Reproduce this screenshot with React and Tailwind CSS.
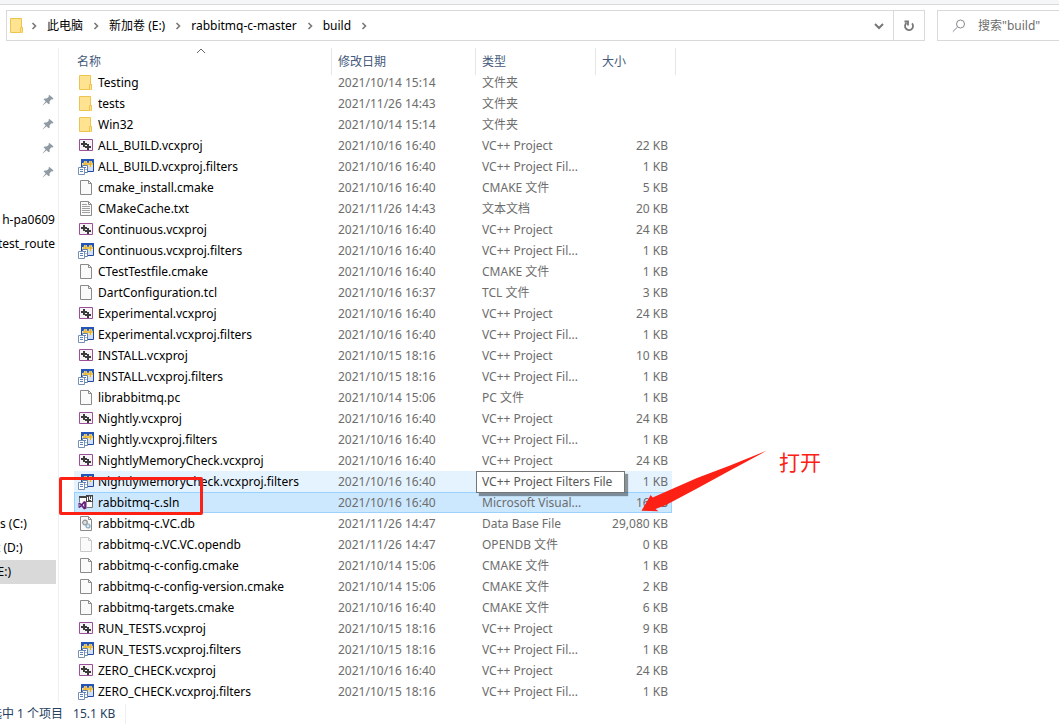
import { useState } from 'react'
import clsx from 'clsx'

const FILES = [
  ['folder', 'Testing', '2021/10/14 15:14', '文件夹', ''],
  ['folder', 'tests', '2021/11/26 14:43', '文件夹', ''],
  ['folder', 'Win32', '2021/10/14 15:14', '文件夹', ''],
  ['project', 'ALL_BUILD.vcxproj', '2021/10/16 16:40', 'VC++ Project', '22 KB'],
  ['filters', 'ALL_BUILD.vcxproj.filters', '2021/10/16 16:40', 'VC++ Project Fil...', '1 KB'],
  ['file', 'cmake_install.cmake', '2021/10/16 16:40', 'CMAKE 文件', '5 KB'],
  ['text', 'CMakeCache.txt', '2021/11/26 14:43', '文本文档', '20 KB'],
  ['project', 'Continuous.vcxproj', '2021/10/16 16:40', 'VC++ Project', '24 KB'],
  ['filters', 'Continuous.vcxproj.filters', '2021/10/16 16:40', 'VC++ Project Fil...', '1 KB'],
  ['file', 'CTestTestfile.cmake', '2021/10/16 16:40', 'CMAKE 文件', '1 KB'],
  ['file', 'DartConfiguration.tcl', '2021/10/16 16:37', 'TCL 文件', '3 KB'],
  ['project', 'Experimental.vcxproj', '2021/10/16 16:40', 'VC++ Project', '24 KB'],
  ['filters', 'Experimental.vcxproj.filters', '2021/10/16 16:40', 'VC++ Project Fil...', '1 KB'],
  ['project', 'INSTALL.vcxproj', '2021/10/15 18:16', 'VC++ Project', '10 KB'],
  ['filters', 'INSTALL.vcxproj.filters', '2021/10/15 18:16', 'VC++ Project Fil...', '1 KB'],
  ['file', 'librabbitmq.pc', '2021/10/14 15:06', 'PC 文件', '1 KB'],
  ['project', 'Nightly.vcxproj', '2021/10/16 16:40', 'VC++ Project', '24 KB'],
  ['filters', 'Nightly.vcxproj.filters', '2021/10/16 16:40', 'VC++ Project Fil...', '1 KB'],
  ['project', 'NightlyMemoryCheck.vcxproj', '2021/10/16 16:40', 'VC++ Project', '24 KB'],
  ['filters', 'NightlyMemoryCheck.vcxproj.filters', '2021/10/16 16:40', '', '1 KB'],
  ['solution', 'rabbitmq-c.sln', '2021/10/16 16:40', 'Microsoft Visual...', '16 KB'],
  ['database', 'rabbitmq-c.VC.db', '2021/11/26 14:47', 'Data Base File', '29,080 KB'],
  ['hidden', 'rabbitmq-c.VC.VC.opendb', '2021/11/26 14:47', 'OPENDB 文件', '0 KB'],
  ['file', 'rabbitmq-c-config.cmake', '2021/10/14 15:06', 'CMAKE 文件', '1 KB'],
  ['file', 'rabbitmq-c-config-version.cmake', '2021/10/14 15:06', 'CMAKE 文件', '2 KB'],
  ['file', 'rabbitmq-targets.cmake', '2021/10/16 16:40', 'CMAKE 文件', '6 KB'],
  ['project', 'RUN_TESTS.vcxproj', '2021/10/15 18:16', 'VC++ Project', '9 KB'],
  ['filters', 'RUN_TESTS.vcxproj.filters', '2021/10/15 18:16', 'VC++ Project Fil...', '1 KB'],
  ['project', 'ZERO_CHECK.vcxproj', '2021/10/16 16:40', 'VC++ Project', '24 KB'],
  ['filters', 'ZERO_CHECK.vcxproj.filters', '2021/10/15 18:16', 'VC++ Project Fil...', '1 KB'],
]

const HOVERED = 'NightlyMemoryCheck.vcxproj.filters'
const CRUMBS = ['此电脑', '新加卷 (E:)', 'rabbitmq-c-master', 'build']
const COLUMNS = ['名称', '修改日期', '类型', '大小']

function Page({ stroke = '#8a8a8a', children }) {
  return (
    <>
      <path d="M2.5 .5H10.5L13.5 3.5V14.5H2.5Z" fill="#fafafa" stroke={stroke} />
      <path d="M10.5 .5V3.5H13.5" fill="none" stroke={stroke} />
      {children}
    </>
  )
}

function FileIcon({ kind }) {
  return (
    <svg viewBox="0 0 16 16" className="size-4 shrink-0" aria-hidden="true">
      {kind === 'folder' && (
        <>
          <path d="M2 .5H13V15H2Z" fill="#ffe391" />
          <path d="M1.5 .5H12.5V9.5H13.5V14.5H1.5Z" fill="none" stroke="#ecc450" />
          <path d="M11.5 14.5V9.5H13.5V14.5" fill="#ffe391" stroke="#ecc450" />
        </>
      )}
      {kind === 'file' && <Page />}
      {kind === 'hidden' && <Page stroke="#c8c8c8" />}
      {kind === 'text' && (
        <Page>
          <path d="M4 3.5H9M4 5.5H12M4 7.5H12M4 9.5H12M4 11.5H12" stroke="#a0a0a0" />
        </Page>
      )}
      {kind === 'database' && (
        <Page>
          <circle cx="7" cy="6.500" r="2.300" fill="#ddd" stroke="#8d9296" strokeWidth="1.200" />
          <circle cx="10" cy="10" r="2" fill="#d5e9f5" stroke="#88a9bd" strokeWidth="1.200" />
        </Page>
      )}
      {kind === 'project' && (
        <>
          <path d="M1.5 1.5H14.5V12.5H1.5Z" fill="#f6f3f6" stroke="#9b4f96" />
          <path d="M6 3V9M3 6H9M10 6V12M7 9H13" stroke="#3b3b3b" strokeWidth="2" />
        </>
      )}
      {kind === 'filters' && (
        <>
          <path d="M3.5 1.5H15.5V12.5H3.5Z" fill="#cfe0f8" stroke="#24489f" />
          <path d="M3 0H16V4H3Z" fill="#2454b8" />
          <path d="M7.500 2V8M5 5H10M12.500 2V8M10 5H15" stroke="#fff1a8" strokeWidth="2.500" />
          <path d="M7.500 2V8M5 5H10M12.500 2V8M10 5H15" stroke="#eab32a" strokeWidth="1.300" />
          <path d="M4.500 6.500H9.500V13.500H4.500Z" fill="#fff" stroke="#6580aa" />
          <path d="M.5 8.500H6.500V15.500H.5Z" fill="#fff" stroke="#7890b5" />
          <path d="M2 10.500H5M2 12.500H5M6 8.500H8M7.500 10.500H8.500" stroke="#5c80b8" />
        </>
      )}
      {kind === 'solution' && (
        <>
          <path d="M1.500 7V1.500H14.500V12.500H9" fill="#fafafa" stroke="#777" />
          <path d="M1 1H8V3H1ZM8 0H15V7H8Z" fill="#454545" />
          <path d="M9.500 2V6M11.500 1.500V4.500H14M13.500 1.500V6" fill="none" stroke="#fff" />
          <path d="M6 6L3.500 9L1.500 7.500L.5 8V12.500L1.500 13L3.500 11.500L6 14.500L8.500 13.500V7ZM6.200 8.500V12L4.600 10.200ZM1.500 9L2.600 10.200L1.500 11.400Z" fill="#68217a" fillRule="evenodd" />
        </>
      )}
    </svg>
  )
}

function Chevron() {
  return (
    <svg viewBox="0 0 6 8" className="mx-2.5 h-2 w-1.5 shrink-0" fill="none" stroke="#777" strokeWidth="1.600" aria-hidden="true">
      <path d="M1.500 1L4.500 4L1.500 7" />
    </svg>
  )
}

function Pin() {
  return (
    <svg viewBox="0 0 12 12" className="size-3" aria-hidden="true">
      <path d="M7.500 1L11.500 4.500L10.500 5.500L9.500 5.300L7.600 7.300L7.700 9.500L6.700 10.300L4.500 8.200L1 11.200L.7 10.900L3.600 7.400L1.600 5.300L2.500 4.400L4.700 4.500L6.800 2.700L6.500 1.800Z" fill="#8f9aa3" />
    </svg>
  )
}

function AddressBar() {
  return (
    <div className="flex h-9 gap-3 pt-[5px] pl-1.5">
      <div className="flex min-w-0 flex-1 border border-[#d9d9d9]">
        <nav className="flex min-w-0 flex-1 items-center pl-0.5" aria-label="路径">
          <span className="-mr-1 flex">
            <FileIcon kind="folder" />
          </span>
          <Chevron />
          {CRUMBS.map((crumb) => (
            <span key={crumb} className="flex items-center">
              <button type="button" className="whitespace-nowrap">{crumb}</button>
              <Chevron />
            </span>
          ))}
        </nav>
        <button type="button" aria-label="以前的位置" className="flex w-7 items-center justify-center">
          <svg viewBox="0 0 10 8" className="h-2 w-2.5" fill="none" stroke="#777" strokeWidth="2">
            <path d="M1 2L5 6L9 2" />
          </svg>
        </button>
        <button type="button" aria-label="刷新" className="flex w-[31px] items-center justify-center border-l border-[#d9d9d9]">
          <svg viewBox="0 0 12 12" className="size-3" fill="none" stroke="#777" strokeWidth="1.800">
            <path d="M3.500 3A4 4 0 1 0 9 3.400M1.500 1.500H5V5.500" />
          </svg>
        </button>
      </div>
      <label className="flex w-[122px] items-center border border-r-0 border-[#d9d9d9] pl-3.5">
        <svg viewBox="0 0 14 14" className="size-3.5 shrink-0" fill="none" stroke="#8a8690" aria-label="搜索">
          <circle cx="8.500" cy="5" r="4" />
          <path d="M5.500 8L.8 12.700" />
        </svg>
        <input type="text" placeholder={'搜索"build"'} className="ml-3 w-full min-w-0 outline-none placeholder:text-[#6d6d6d]" />
      </label>
    </div>
  )
}

function Sidebar() {
  return (
    <aside className="w-[59px] shrink-0 overflow-hidden border-r border-[#f0f0f0] pt-10 leading-6">
      <ul>
        {[1, 2, 3, 4].map((n) => (
          <li key={n} className="flex h-6 items-center justify-end pr-1">
            <Pin />
          </li>
        ))}
      </ul>
      <ul className="mt-6 pr-[3px]">
        {['h-pa0609', 'test_route'].map((name) => (
          <li key={name} className="flex h-6 justify-end whitespace-nowrap">{name}</li>
        ))}
      </ul>
      <ul className="mt-64 mr-0.5 whitespace-nowrap">
        <li className="h-6">s (C:)</li>
        <li className="h-6"><span className="-ml-1">t (D:)</span></li>
        <li className="h-6 bg-[#d9d9d9]"><span className="-ml-1.5">(E:)</span></li>
      </ul>
    </aside>
  )
}

function FileTable() {
  const [selected, setSelected] = useState('rabbitmq-c.sln')

  return (
    <table className="w-[598px] table-fixed border-collapse">
      <colgroup>
        <col className="w-[258px]" />
        <col className="w-36" />
        <col className="w-[120px]" />
        <col className="w-[76px]" />
      </colgroup>
      <thead>
        <tr>
          {COLUMNS.map((column, i) => (
            <th key={column} className="relative p-0 text-left font-normal text-[#44597a]">
              {i === 0 && (
                <svg viewBox="0 0 10 6" className="absolute top-0 left-[122px] h-1.5 w-2.5" fill="none" stroke="#666">
                  <path d="M1 5L5 1L9 5" />
                </svg>
              )}
              <div
                className={clsx(
                  '-mb-[3px] h-[27px] border-r border-[#e5e5e5] leading-[27px]',
                  i === 0 ? 'pl-[3px]' : 'pl-1.5',
                  i === 3 && '-mr-1',
                )}
              >
                {column}
              </div>
            </th>
          ))}
        </tr>
      </thead>
      <tbody className="leading-[21px] text-[#6d6d6d]">
        {FILES.map(([kind, name, date, type, size]) => (
          <tr
            key={name}
            onClick={() => setSelected(name)}
            className={clsx(
              name === HOVERED && 'bg-[#e5f3ff]',
              name === selected && 'bg-[#cce8ff] outline -outline-offset-1 outline-[#99d1ff]',
            )}
          >
            <td className="p-0">
              <div className="flex h-[21px] items-center gap-1 pl-1 whitespace-nowrap text-black">
                <FileIcon kind={kind} />
                {name}
              </div>
            </td>
            <td className="p-0 pl-1.5 whitespace-nowrap">{date}</td>
            <td className="p-0 pl-1.5 whitespace-nowrap">{type}</td>
            <td className="p-0 pr-1 text-right whitespace-nowrap">{size}</td>
          </tr>
        ))}
      </tbody>
    </table>
  )
}

export default function App() {
  return (
    <div className="min-h-screen overflow-hidden bg-white font-['Noto_Sans','Noto_Sans_CJK_SC',sans-serif] text-[12px] text-black">
      <div className="h-[5px] border-b border-[#d9dadc] bg-[#f5f6f7]" />
      <AddressBar />
      <div className="mt-[7px] flex">
        <Sidebar />
        <main className="relative min-w-0 flex-1 pl-[15px]">
          <FileTable />
          <div role="tooltip" className="absolute top-[423px] left-[417px] border border-[#767676] bg-white pr-3 pl-[5px] leading-5 whitespace-nowrap text-[#575757] shadow-[3px_3px_1px_rgba(0,0,0,0.4)]">
            VC++ Project Filters File
          </div>
          <div className="absolute top-[429px] left-0 h-[38px] w-36 rounded-xs border-3 border-[#fc2015]" />
          <svg viewBox="0 0 126 62" className="absolute top-[402px] left-[582px] h-[62px] w-[126px]" fill="#fc2015" aria-hidden="true">
            <path d="M125.500 .8L89 15.500L56 28L11.700 47.500L9.700 45L.5 60.700L17.500 61.300L14.500 59L25 55L56 38.500L89 20.500Z" />
          </svg>
          <p className="absolute top-[400px] left-[720px] text-[21px] leading-7 text-[#fc2015]">打开</p>
        </main>
      </div>
      <footer className="flex h-[22px] items-center overflow-hidden pt-0.5 leading-5 whitespace-nowrap text-[#26405e]">
        <span className="-ml-2.5">选中 1 个项目</span>
        <span className="ml-2.5 border-r border-[#eeeeee] pr-2.5">15.1 KB</span>
      </footer>
    </div>
  )
}
